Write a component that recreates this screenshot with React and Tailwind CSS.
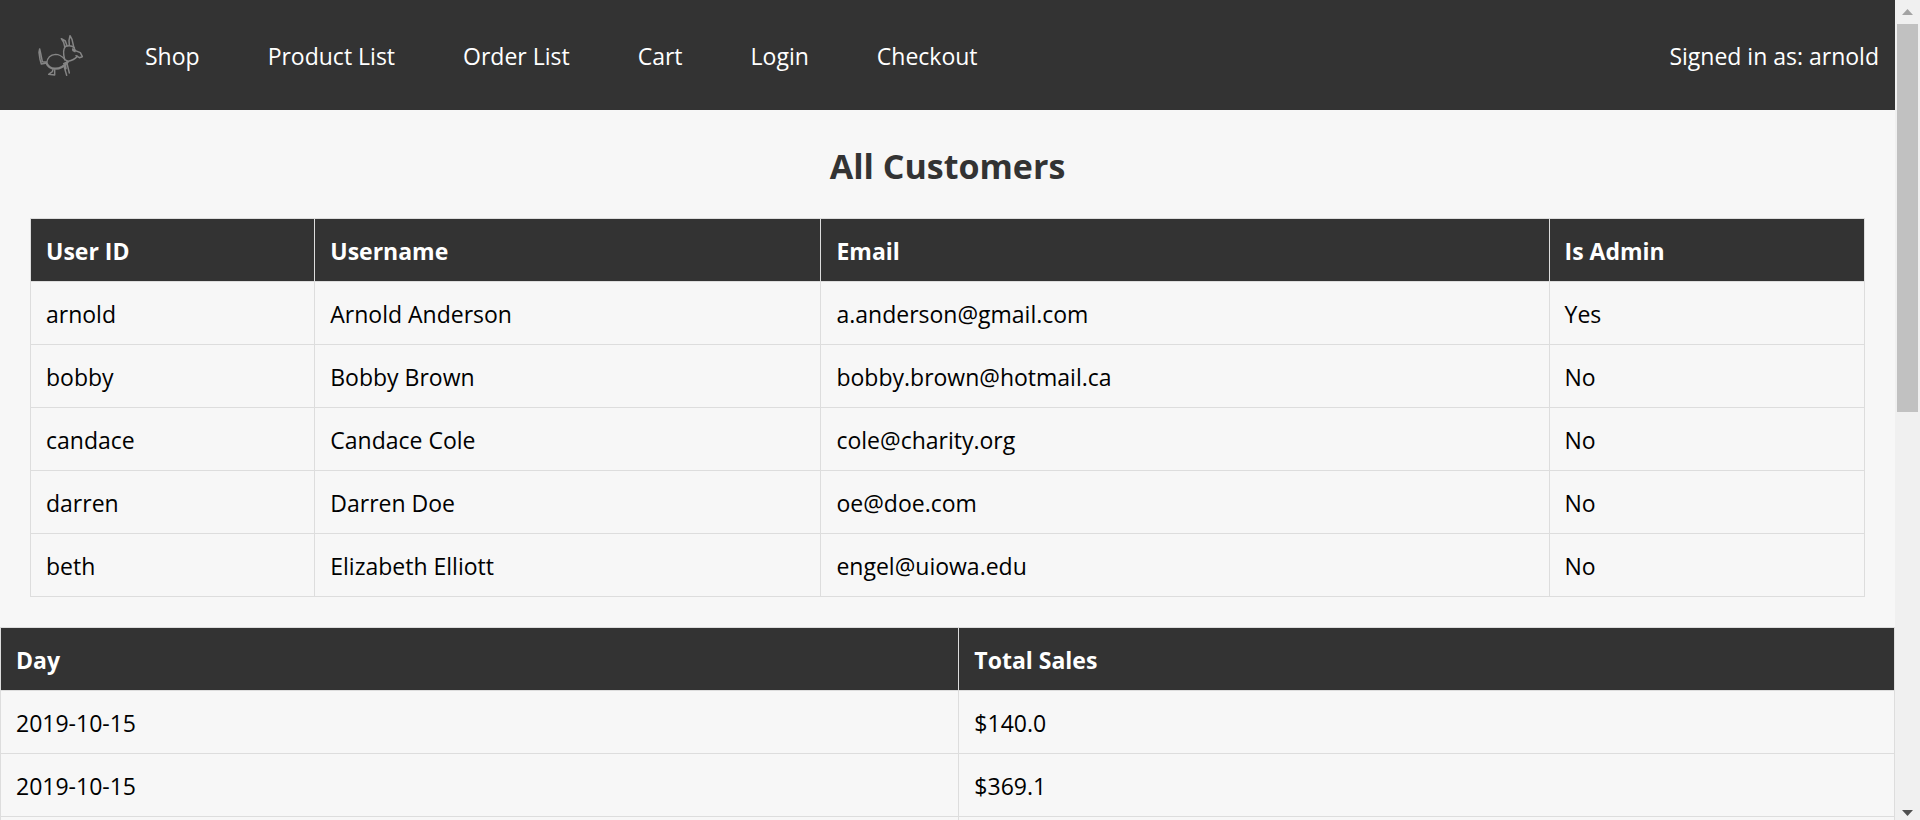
const links = ["Shop", "Product List", "Order List", "Cart", "Login", "Checkout"];

const customers = [
  ["arnold", "Arnold Anderson", "a.anderson@gmail.com", "Yes"],
  ["bobby", "Bobby Brown", "bobby.brown@hotmail.ca", "No"],
  ["candace", "Candace Cole", "cole@charity.org", "No"],
  ["darren", "Darren Doe", "oe@doe.com", "No"],
  ["beth", "Elizabeth Elliott", "engel@uiowa.edu", "No"],
];

const sales = [
  ["2019-10-15", "$140.0"],
  ["2019-10-15", "$369.1"],
  ["\u00a0", "\u00a0"],
];

function Logo() {
  return (
    <svg
      viewBox="45 30 150 150"
      className="h-[50px] w-[50px]"
      fill="none"
      stroke="#858585"
      strokeWidth="4.5"
      strokeLinecap="round"
      strokeLinejoin="round"
      aria-hidden="true"
    >
      <path d="M59 87 L57 97 L60 118 L64 132 L80 129 M59 87 L62 100 L67 125 L80 126" />
      <path d="M80 129 C82 113 91 104 107 103 C119 103 127 110 134 117" strokeWidth="4" />
      <path d="M80 130 C84 140 93 145 104 146 C121 147 133 138 143 126" strokeWidth="7" />
      <path d="M134 119 C130 104 129 87 137 79 C146 76 156 77 163 83" />
      <path d="M134 80 L131 67 L124 56 L136 63 L141 77" />
      <path d="M148 76 L147 61 L150 47 L156 58 L161 80" />
      <path d="M158 87 L163 90 L165 95 L159 92 Z" />
      <path d="M163 86 L166 92 L181 98 L187 110 L178 113 L168 107" />
      <path d="M172 109 C165 117 156 122 145 124 L134 119 M143 125 L131 131" />
      <path d="M99 148 L97 155 L86 163 L104 165 L104 150" />
      <path d="M132 138 L140 166 M141 130 L148 159 M136 131 L138 146" />
    </svg>
  );
}

function DataTable({ columns, rows, label }) {
  return (
    <table aria-label={label} className="w-full table-fixed border-collapse text-left">
      <colgroup>
        {columns.map(([name, width]) => (
          <col key={name} className={width} />
        ))}
      </colgroup>
      <thead className="bg-[#333333] text-white">
        <tr>
          {columns.map(([name]) => (
            <th key={name} scope="col" className="border border-[#dddddd] px-[15px] pt-4 pb-[14px] font-bold">
              {name}
            </th>
          ))}
        </tr>
      </thead>
      <tbody>
        {rows.map((row, i) => (
          <tr key={i}>
            {row.map((cell, j) => (
              <td key={j} className="border border-[#dddddd] px-[15px] pt-4 pb-[14px]">
                {cell}
              </td>
            ))}
          </tr>
        ))}
      </tbody>
    </table>
  );
}

function ScrollTrack() {
  return (
    <div aria-hidden="true" className="flex w-[25px] shrink-0 flex-col items-center bg-[#f0f0f0]">
      <svg viewBox="0 0 25 24" className="h-6 w-full shrink-0">
        <path d="M7 15 L12.5 9 L18 15 Z" fill="#a3a3a3" />
      </svg>
      <div className="w-full grow px-[2px]">
        <div className="h-[50.3%] bg-[#c1c1c1]" />
      </div>
      <svg viewBox="0 0 25 24" className="h-6 w-full shrink-0">
        <path d="M7 14 L12.5 20 L18 14 Z" fill="#505050" />
      </svg>
    </div>
  );
}

export default function App() {
  return (
    <div className="flex h-screen bg-[#f7f7f7] font-['Open_Sans','Noto_Sans',sans-serif] text-[23px] leading-8 text-black">
      <div className="min-w-0 grow overflow-hidden">
        <header className="flex items-center justify-between bg-[#333333] py-[30px] pr-4 pl-[35px] text-white">
          <nav className="flex items-center gap-[68px]">
            <a href="#home" aria-label="Home" className="-mr-2">
              <Logo />
            </a>
            {links.map((name) => (
              <a key={name} href="#page" className="pt-[2px] whitespace-nowrap">
                {name}
              </a>
            ))}
          </nav>
          <p className="pt-[2px] whitespace-nowrap">Signed in as: arnold</p>
        </header>
        <main>
          <section className="px-[30px]">
            <h1 className="pt-8 pb-7 text-center text-[34px] leading-[48px] font-bold text-[#333333]">
              All Customers
            </h1>
            <DataTable
              label="All customers"
              columns={[
                ["User ID", "w-[15.5%]"],
                ["Username", "w-[27.6%]"],
                ["Email", "w-[39.7%]"],
                ["Is Admin", "w-[17.2%]"],
              ]}
              rows={customers}
            />
          </section>
          <section className="mt-[30px]">
            <DataTable
              label="Sales by day"
              columns={[
                ["Day", "w-[50.6%]"],
                ["Total Sales", "w-[49.4%]"],
              ]}
              rows={sales}
            />
          </section>
        </main>
      </div>
      <ScrollTrack />
    </div>
  );
}
